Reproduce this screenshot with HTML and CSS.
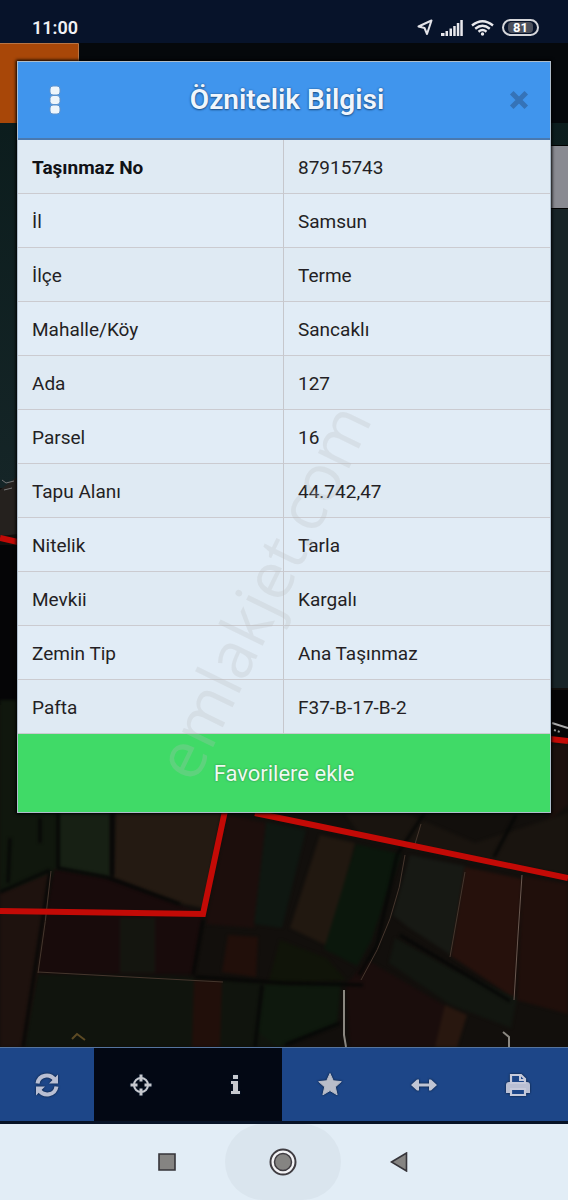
FILE: index.html
```html
<!DOCTYPE html>
<html lang="tr">
<head>
<meta charset="utf-8">
<meta name="viewport" content="width=device-width, initial-scale=1">
<title>Öznitelik Bilgisi</title>
<link rel="stylesheet" href="styles.css">
</head>
<body>
<div class="screen">
  <header class="status">
    <time class="clock">11:00</time>
    <div class="status-icons">
      <svg width="16" height="17" viewBox="0 0 16 17"><path d="M14.500 1.500 10 15 7.500 9 1.500 7.500Z" fill="none" stroke="#e3e3e8" stroke-width="2" stroke-linejoin="round"/></svg>
      <svg width="22" height="16" viewBox="0 0 22 16" fill="#e8e8ec"><path d="M0 13h3.500v3H0zM4.500 11h2.500v5H4.500zM8.500 8.500h2.500V16H8.500zM12.200 6h2.500v10h-2.500zM15.800 3h2.500v13h-2.500zM19.300 0h2.500v16h-2.500z"/></svg>
      <svg width="23" height="16" viewBox="0 0 23 16" fill="none" stroke="#e8e8ec" stroke-width="2.400"><path d="M1 5.500Q11.500-3 22 5.500M4.200 8.700q7.300-6 14.600 0M7.500 11.700q4-3.300 8 0"/><circle cx="11.500" cy="14" r="1.700" fill="#e8e8ec" stroke="none"/></svg>
      <span class="battery"><span class="battery-level">81</span></span>
    </div>
  </header>

  <main class="map">
    <svg class="terrain" viewBox="0 43 568 1004" preserveAspectRatio="none" aria-hidden="true">
      <defs>
        <linearGradient id="sea" x1="0" y1="0" x2="0" y2="1"><stop offset="0" stop-color="#0a1b1b"/><stop offset="1" stop-color="#152527"/></linearGradient>
        <filter id="soft" color-interpolation-filters="sRGB"><feGaussianBlur stdDeviation="1.500"/></filter>
      </defs>
      <path fill="#120f0c" d="M0 43h568v1004H0z"/>
      <path fill="url(#sea)" d="M0 43h568v445H0z"/>
      <path fill="#182427" d="M540 208h28v480h-28z"/>
      <path fill="#050506" d="M0 545h20v160H0zM548 690h20v48h-20z"/>
      <path fill="#25211e" d="M0 490l18-14v58l-18 2z"/>
      <path d="M2 480l4 3 8-2M4 490l8-2" stroke="#777" stroke-width="1" fill="none"/>
      <g filter="url(#soft)">
        <path fill="#10170d" d="M0 700h60v175L0 892z"/>
        <path fill="#172014" d="M60 800h50v78l-50-9z"/>
        <path fill="#241a12" d="M116 810h106l-19 98-28-6-61-24z"/>
        <path fill="#1e120e" d="M0 893l50-20-5 60-20 114H0z"/>
        <path fill="#180b0b" d="M54 869l60 10 65 26 24 9-9 60H38z"/>
        <path fill="#14150f" d="M120 918h35v55h-35z"/>
        <path fill="#10140d" d="M38 974l157 4 93 6v63H24z"/>
        <path fill="#210f0a" d="M194 980h28l-2 67h-28zM228 935l30 2-2 40-34-5z"/>
        <path fill="#1c0e0c" d="M228 815l38 8-12 105-48-4z"/>
        <path fill="#0f1711" d="M266 822l40 8-24 98-28-4z"/>
        <path fill="#211810" d="M320 835l35 8-27 103-38-18z"/>
        <path fill="#0b170c" d="M356 844l45 10-30 87-14 25-33-17z"/>
        <path fill="#171914" d="M410 855l55 11-14 89-43-28-15-12z"/>
        <path fill="#26110c" d="M465 867l57 12-8 119-63-42z"/>
        <path fill="#200f0b" d="M523 876l45 8v130l-51-14z"/>
        <path fill="#121610" d="M395 938l55 30 67 30-6 30-60-23-62-42z"/>
        <path fill="#1a0d0c" d="M367 960l85 50-10 37h-92l-4-62z"/>
        <path fill="#28170f" d="M445 1005l22 10-10 32h-22z"/>
        <path fill="#0e180d" d="M265 985l76-2-4 42-60 22-20-16z"/>
        <path fill="#101409" d="M280 940l46 18 20 22-78 4z"/>
        <path fill="#19140f" d="M345 813h60l70 30 93-30v62l-208-40z"/>
        <path fill="#1c100d" d="M550 745h18v60l-18 15z"/>
      </g>
      <g fill="none" stroke="#060706" stroke-width="3" filter="url(#soft)">
        <path d="M0 892l50-22M58 812v56l48 9 74 27M112 812v64M425 812l-28 43-20 90-18 30M516 815l-22 42M50 872l-27 175M203 920l-10 55M195 977l90 6 78 2M400 935l110 66M262 985l-7 62M285 1045l55-22M40 818v25M10 838l-2 45"/>
      </g>
      <g fill="none" stroke-width="1" stroke="#45362d">
        <path d="M51 871q-5 50-13 102M38 972l185 10M421 824l-6 20M465 872l-15 85M405 855q-8 65-44 125"/>
        <path stroke="#6a5850" d="M522 875l-4 60-4 65"/>
        <path stroke="#8b8881" stroke-width="2" d="M344 990v45l2 12M503 1032l6 5v10"/>
      </g>
      <path d="M72 1039l5-5 8 6" stroke="#5c4a24" stroke-width="2" fill="none"/>
      <g fill="none" stroke="#c30a06" stroke-width="6">
        <path d="M0 911l203 3 23-108M255 813l58 12 255 53"/>
        <path d="M0 538l18 4M550 739l18 2"/>
      </g>
      <path d="M552 723l16 5" stroke="#aaa" stroke-width="2"/>
      <path d="M554 730l6 2" stroke="#999" stroke-width="2" stroke-dasharray="2 2"/>
      <path fill="#05080b" d="M0 43h568v80H0z"/>
      <path fill="#a84708" d="M0 43h78v80H0z"/>
      <path d="M0 43.500h78.500V123" fill="none" stroke="#b87545"/>
      <path fill="#898a91" d="M540 146h28v62h-28z"/>
      <path d="M540 145.500h28M540 208.500h28" stroke="#000"/>
    </svg>

    <section class="dialog" role="dialog" aria-labelledby="dialog-title">
      <div class="dialog-head">
        <button class="icon-button" type="button" aria-label="Menü">
          <svg width="12" height="30" viewBox="0 0 12 30" fill="#eef5fb" stroke="#5c93cf" stroke-width="1"><rect x="1" y="1" width="10" height="9" rx="3"/><rect x="1" y="10.500" width="10" height="9" rx="3"/><rect x="1" y="20" width="10" height="9" rx="3"/></svg>
        </button>
        <h1 class="title" id="dialog-title">Öznitelik Bilgisi</h1>
        <button class="icon-button" type="button" aria-label="Kapat">
          <svg width="20" height="20" viewBox="0 0 20 20" stroke="#3573b8" stroke-width="5" stroke-linecap="square"><path d="M4.500 4.500l11 11m0-11-11 11"/></svg>
        </button>
      </div>
      <table class="attributes">
        <tbody>
          <tr><th scope="row" class="strong">Taşınmaz No</th><td>87915743</td></tr>
          <tr><th scope="row">İl</th><td>Samsun</td></tr>
          <tr><th scope="row">İlçe</th><td>Terme</td></tr>
          <tr><th scope="row">Mahalle/Köy</th><td>Sancaklı</td></tr>
          <tr><th scope="row">Ada</th><td>127</td></tr>
          <tr><th scope="row">Parsel</th><td>16</td></tr>
          <tr><th scope="row">Tapu Alanı</th><td>44.742,47</td></tr>
          <tr><th scope="row">Nitelik</th><td>Tarla</td></tr>
          <tr><th scope="row">Mevkii</th><td>Kargalı</td></tr>
          <tr><th scope="row">Zemin Tip</th><td>Ana Taşınmaz</td></tr>
          <tr><th scope="row">Pafta</th><td>F37-B-17-B-2</td></tr>
        </tbody>
      </table>
      <button class="favorite" type="button">Favorilere ekle</button>
      <div class="watermark"><span class="watermark-text">emlakjet.com</span></div>
    </section>
  </main>

  <nav class="toolbar" aria-label="Harita araçları">
    <button class="tool" type="button" aria-label="Yenile"><svg width="26" height="26" viewBox="0 0 26 26"><g fill="none" stroke="#b9bfd3" stroke-width="4"><path d="M3.500 11.500C5 2.500 16 1 21 8M22.500 14.500C21 23.500 10 25 5 18"/></g><path fill="#b9bfd3" d="M24 2.500v9h-9zM2 23.500v-9h9z"/></svg></button>
    <button class="tool dark" type="button" aria-label="Konum"><svg width="26" height="26" viewBox="0 0 26 26" fill="none" stroke="#c6c8ce"><circle cx="13" cy="13" r="7" stroke-width="2"/><path d="M13 2.500v7M13 16.500v7M2.500 13h7M16.500 13h7" stroke-width="3"/></svg></button>
    <button class="tool dark" type="button" aria-label="Bilgi"><svg width="26" height="26" viewBox="0 0 26 26" fill="#c6c8ce"><path d="M11 3h5v4h-5zM9 9h7v10h2v3H9v-3h2v-7H9z"/></svg></button>
    <button class="tool" type="button" aria-label="Favoriler"><svg width="26" height="26" viewBox="0 0 26 26" fill="#b9bdc9" stroke="#b9bdc9" stroke-linejoin="round"><path d="M13 1.500l3.300 7.300 8 .8-6 5.300 1.800 7.900-7.100-4.200-7.100 4.200 1.800-7.900-6-5.300 8-.8z"/></svg></button>
    <button class="tool" type="button" aria-label="Ölçüm"><svg width="28" height="26" viewBox="0 0 28 26" fill="#c0c5d4"><path d="M1 13l6-5.500h2v4h10v-4h2l6 5.500-6 5.500h-2v-4H9v4H7z"/></svg></button>
    <button class="tool" type="button" aria-label="Yazdır"><svg width="26" height="26" viewBox="0 0 26 26"><path d="M4 10h18q3 0 3 3v8H1v-8q0-3 3-3z" fill="#b9bfd3"/><path d="M6 11V3h10l4 4v4z" fill="#1d4688" stroke="#c6cadb" stroke-width="2.200"/><path d="M6 17h14v6H6z" fill="#1d4688" stroke="#c6cadb" stroke-width="2.200"/><path d="M15 3v5h5" fill="none" stroke="#c6cadb" stroke-width="2"/></svg></button>
  </nav>

  <nav class="system" aria-label="Sistem">
    <button class="system-key" type="button" aria-label="Son uygulamalar"><svg width="18" height="18" viewBox="0 0 18 18"><path d="M1 1h16v16H1z" fill="#858482" stroke="#36353a" stroke-width="1.600"/></svg></button>
    <button class="system-key home" type="button" aria-label="Ana ekran"><svg width="28" height="28" viewBox="0 0 28 28"><circle cx="14" cy="14" r="12.500" fill="#f3f3f5" stroke="#403d42" stroke-width="2"/><circle cx="14" cy="14" r="8.500" fill="#858482" stroke="#403d42" stroke-width="1.500"/></svg></button>
    <button class="system-key" type="button" aria-label="Geri"><svg width="18" height="20" viewBox="0 0 18 20"><path d="M1.500 10 16.500 1v18z" fill="#858482" stroke="#36353a" stroke-width="1.600"/></svg></button>
  </nav>
</div>
</body>
</html>
```
FILE: styles.css
```css
* { box-sizing: border-box; }

body {
  margin: 0;
  background: #05080b;
  color: #241f24;
  font-family: Roboto, "Liberation Sans", sans-serif;
  font-size: 19px;
}

button {
  margin: 0;
  padding: 0;
  border: 0;
  background: none;
  color: inherit;
  font: inherit;
}

svg { display: block; }

.screen {
  display: flex;
  flex-direction: column;
  min-height: 100vh;
}

.status {
  display: flex;
  align-items: center;
  justify-content: space-between;
  padding: 16px 29px 4px 32px;
  background: #07132a;
}

.clock {
  color: #f1f1f4;
  font-size: 18px;
  font-weight: 600;
  line-height: 23px;
}

.status-icons {
  display: flex;
  align-items: center;
  gap: 8px;
}

.battery {
  display: flex;
  align-items: center;
  justify-content: center;
  width: 37px;
  height: 17px;
  border: 2px solid #d5d6da;
  border-radius: 9px;
}

.battery-level {
  padding: 0 5px;
  border-radius: 4px;
  background: #4c505c;
  color: #fff;
  font-size: 13px;
  font-weight: 700;
  line-height: 11px;
}

.map {
  position: relative;
  flex: 1;
  padding: 18px 17px;
}

.terrain {
  position: absolute;
  inset: 0;
  width: 100%;
  height: 100%;
}

.dialog {
  position: relative;
  overflow: hidden;
  border: 1px solid #aebdcb;
  background: #e1ecf6;
  box-shadow: 0 0 3px 1px #000;
}

.dialog-head {
  display: flex;
  align-items: center;
  justify-content: space-between;
  height: 78px;
  padding: 0 11px 0 17px;
  border-bottom: 2px solid #4a79af;
  background: #4095ed;
}

.icon-button {
  display: grid;
  place-items: center;
  width: 40px;
  height: 48px;
}

.title {
  margin: 0;
  color: #f0f6fc;
  font-size: 28px;
  font-weight: 600;
  line-height: 32px;
  text-shadow: 0 0 2px #1c5089, 0 1px 2px #1c5089;
}

.attributes {
  width: 100%;
  border-collapse: separate;
  border-spacing: 0;
  table-layout: fixed;
}

.attributes th,
.attributes td {
  height: 54px;
  padding: 1px 14px 0;
  border-bottom: 1px solid #cbcbd0;
  font-weight: 400;
  text-align: left;
}

.attributes th { border-right: 1px solid #c6c7cc; }
.attributes .strong { color: #111216; font-weight: 700; }
.attributes tr:nth-child(odd) { background: #dfeaf3; }

.favorite {
  display: block;
  width: 100%;
  height: 78px;
  background: #40da67;
  color: #eefbf1;
  font-size: 22px;
  text-shadow: 0 0 2px #287d40;
}

.watermark {
  position: absolute;
  inset: 0;
  display: grid;
  place-items: center;
  padding: 308px 46px 0 0;
  pointer-events: none;
}

.watermark-text {
  color: #b9bcbe;
  font-family: "Open Sans", sans-serif;
  font-size: 65px;
  line-height: 80px;
  opacity: 0.25;
  transform: rotate(-64deg);
}

.toolbar {
  display: grid;
  grid-template-columns: repeat(6, 1fr);
  padding-right: 3px;
  border-top: 1px solid #55749f;
  border-bottom: 3px solid #061226;
  background: #1d4688;
}

.tool {
  display: grid;
  place-items: center;
  height: 73px;
}

.tool svg { filter: drop-shadow(0 0 1px #071831); }
.tool.dark { background: #030814; }

.system {
  display: flex;
  align-items: center;
  justify-content: center;
  height: 76px;
  padding-right: 2px;
  background: #e2edf6;
}

.system-key {
  display: grid;
  place-items: center;
  width: 116px;
  height: 76px;
}

.system-key.home {
  border-radius: 38px;
  background: #dae5ee;
}
```
